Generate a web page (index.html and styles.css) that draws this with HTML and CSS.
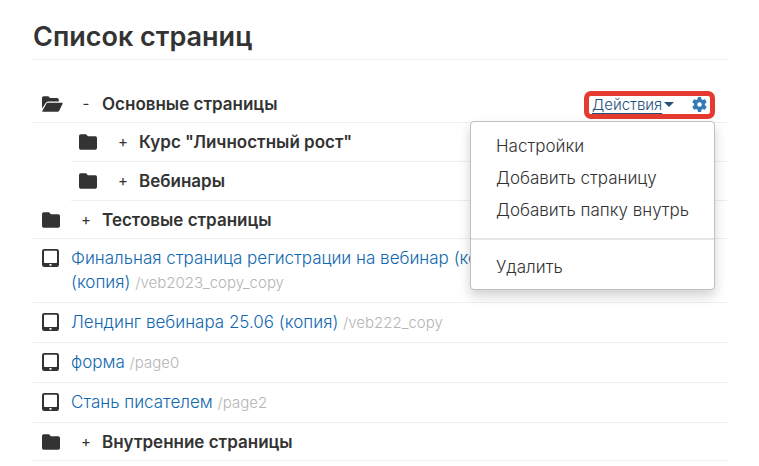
FILE: index.html
```html
<!DOCTYPE html>
<html lang="ru">
<head>
<meta charset="utf-8">
<meta name="viewport" content="width=device-width, initial-scale=1">
<title>Список страниц</title>
<link rel="stylesheet" href="styles.css">
</head>
<body>
<svg class="sprite" aria-hidden="true">
  <symbol id="folder" viewBox="0 0 18 16"><path d="M0 2Q0 .3 1.7.3H6.600Q7.500.3 8 1.200L8.800 2.200H16.300Q18 2.200 18 3.900V14Q18 15.700 16.300 15.700H1.700Q0 15.700 0 14Z"/></symbol>
  <symbol id="folder-open" viewBox="0 0 21 16"><path d="M0 12.500V1.800Q0 .2 1.600.2H5.900Q6.700.2 7.200 1L8 2.100H15.200Q16.800 2.100 16.800 3.700V5.600H6.300Q4.500 5.600 3.700 7.100Z"/><path d="M.6 15.800Q0 15.800.3 15.100L4.300 7.700Q4.800 6.800 5.900 6.800H20Q21 6.800 20.600 7.700L17.200 14.700Q16.700 15.800 15.600 15.800Z"/></symbol>
  <symbol id="tablet" viewBox="0 0 17 18"><path fill-rule="evenodd" d="M2.200 0H14.800Q17 0 17 2.200V15.800Q17 18 14.800 18H2.200Q0 18 0 15.800V2.200Q0 0 2.200 0ZM2.700 1.700Q2 1.700 2 2.400V13.200Q2 13.900 2.700 13.900H14.300Q15 13.900 15 13.200V2.400Q15 1.700 14.300 1.700ZM7.500 15.100V16.700H9.500V15.100Z"/></symbol>
  <symbol id="gear" viewBox="1 1 21 22"><path d="M19.400 13a7.500 7.500 0 0 0 0-2l2.400-1.900a.6.6 0 0 0 .1-.7l-2.200-3.900a.6.6 0 0 0-.7-.2l-2.800 1.100a8 8 0 0 0-1.900-1.100L13.900 1.500a.6.600 0 0 0-.6-.5h-3.600a.6.6 0 0 0-.6.5L8.700 4.300a8 8 0 0 0-1.900 1.100L4 4.300a.6.6 0 0 0-.7.200L1.100 8.400a.6.6 0 0 0 .1.700L3.600 11a8 8 0 0 0 0 2l-2.400 1.900a.6.6 0 0 0-.1.700l2.200 3.900c.1.200.4.300.7.200l2.800-1.100a8 8 0 0 0 1.900 1.100l.4 2.800c.1.300.3.500.6.500h3.600c.3 0 .5-.2.600-.5l.4-2.800a8 8 0 0 0 1.900-1.100l2.800 1.100c.3.100.6 0 .7-.2l2.200-3.900a.6.6 0 0 0-.1-.7ZM11.500 15.300a3.300 3.300 0 1 1 0-6.600 3.300 3.300 0 0 1 0 6.600Z"/></symbol>
</svg>
<main class="page">
  <h1 class="title">Список страниц</h1>
  <ul class="list">
    <li>
      <div class="row row-active">
        <svg class="icon icon-open"><use href="#folder-open"/></svg>
        <button class="toggle" type="button" aria-label="Свернуть">-</button>
        <span class="name">Основные страницы</span>
        <div class="actions">
          <button class="actions-button" type="button" aria-expanded="true"><span class="actions-label">Действия</span><span class="caret"></span></button>
          <button class="settings" type="button" aria-label="Настройки"><svg class="gear"><use href="#gear"/></svg></button>
          <ul class="menu">
            <li><a href="#">Настройки</a></li>
            <li><a href="#">Добавить страницу</a></li>
            <li><a href="#">Добавить папку внутрь</a></li>
            <li class="divider"></li>
            <li><a href="#">Удалить</a></li>
          </ul>
        </div>
      </div>
      <ul class="list nested">
        <li class="row"><svg class="icon"><use href="#folder"/></svg><button class="toggle" type="button" aria-label="Развернуть">+</button><span class="name">Курс "Личностный рост"</span></li>
        <li class="row"><svg class="icon"><use href="#folder"/></svg><button class="toggle" type="button" aria-label="Развернуть">+</button><span class="name">Вебинары</span></li>
      </ul>
    </li>
    <li class="row"><svg class="icon"><use href="#folder"/></svg><button class="toggle" type="button" aria-label="Развернуть">+</button><span class="name">Тестовые страницы</span></li>
    <li class="row row-page"><svg class="icon icon-tablet"><use href="#tablet"/></svg><div class="text"><a href="#">Финальная страница регистрации на вебинар (копия) (копия)</a> <span class="path">/veb2023_copy_copy</span></div></li>
    <li class="row row-page"><svg class="icon icon-tablet"><use href="#tablet"/></svg><div class="text"><a href="#">Лендинг вебинара 25.06 (копия)</a> <span class="path">/veb222_copy</span></div></li>
    <li class="row row-page"><svg class="icon icon-tablet"><use href="#tablet"/></svg><div class="text"><a href="#">форма</a> <span class="path">/page0</span></div></li>
    <li class="row row-page"><svg class="icon icon-tablet"><use href="#tablet"/></svg><div class="text"><a href="#">Стань писателем</a> <span class="path">/page2</span></div></li>
    <li class="row"><svg class="icon"><use href="#folder"/></svg><button class="toggle" type="button" aria-label="Развернуть">+</button><span class="name">Внутренние страницы</span></li>
  </ul>
</main>
</body>
</html>
```
FILE: styles.css
```css
* { box-sizing: border-box; }
body {
  margin: 0;
  background: #fff;
  color: #333;
  font: 300 17px/24px Inter, "Open Sans", sans-serif;
}
.sprite { display: none; }
.page { padding: 17px 32px 0 33px; }
.title {
  margin: 0 0 25px;
  padding-bottom: 2px;
  border-bottom: 1px solid #eee;
  font-size: 27px;
  font-weight: 600;
  line-height: 40px;
}
.list { margin: 0; padding: 0; list-style: none; }
.nested { margin-left: 38px; }
.row {
  display: flex;
  align-items: center;
  min-height: 38px;
  padding-left: 9px;
  border-bottom: 1px solid #eee;
}
.nested .row { min-height: 39px; padding-left: 8px; }
.icon { flex: none; width: 18px; height: 16px; fill: #333; }
.icon-open { width: 21px; margin-right: -3px; }
.toggle {
  width: 20px;
  margin: 0 6px 0 16px;
  padding: 0;
  border: 0;
  background: none;
  color: #333;
  font: 400 15px/20px Inter, sans-serif;
}
.name { font-weight: 600; }
.row-page { align-items: flex-start; padding-top: 7px; padding-bottom: 8px; }
.icon-tablet { width: 17px; height: 18px; margin: 3px 12px 0 0; }
.text { padding-right: 160px; }
.text a { color: #1068b0; text-decoration: none; }
.path { color: #b5b5b5; font-size: 15px; line-height: 16px; }
.actions {
  position: relative;
  display: flex;
  align-items: center;
  justify-content: space-between;
  width: 131px;
  height: 28px;
  margin: 2px 12px 0 auto;
  padding: 0 3px;
  border: 5px solid #e53a30;
  border-radius: 7px;
}
.actions button { display: flex; align-items: center; padding: 0; border: 0; background: none; }
.actions-button { color: #23527c; font: 300 15px/20px Inter, sans-serif; }
.actions-label {
  padding-right: 2px;
  text-decoration: underline;
  text-underline-offset: 3px;
}
.caret { border: 5px solid transparent; border-top-color: #23527c; border-bottom: 0; }
.gear { width: 15px; height: 15px; fill: #337ab7; }
.menu {
  position: absolute;
  z-index: 1;
  top: 25px;
  right: -5px;
  width: 245px;
  margin: 0;
  padding: 8px 0 6px;
  list-style: none;
  background: #fff;
  border: 1px solid #c0c0c0;
  border-radius: 4px;
  box-shadow: 0 6px 12px rgba(0, 0, 0, .18);
}
.menu a {
  display: block;
  padding: 4px 25px;
  color: #333;
  line-height: 24px;
  text-decoration: none;
  white-space: nowrap;
}
.menu .divider { height: 2px; margin: 12px 0 11px; background: #e5e5e5; }
```
